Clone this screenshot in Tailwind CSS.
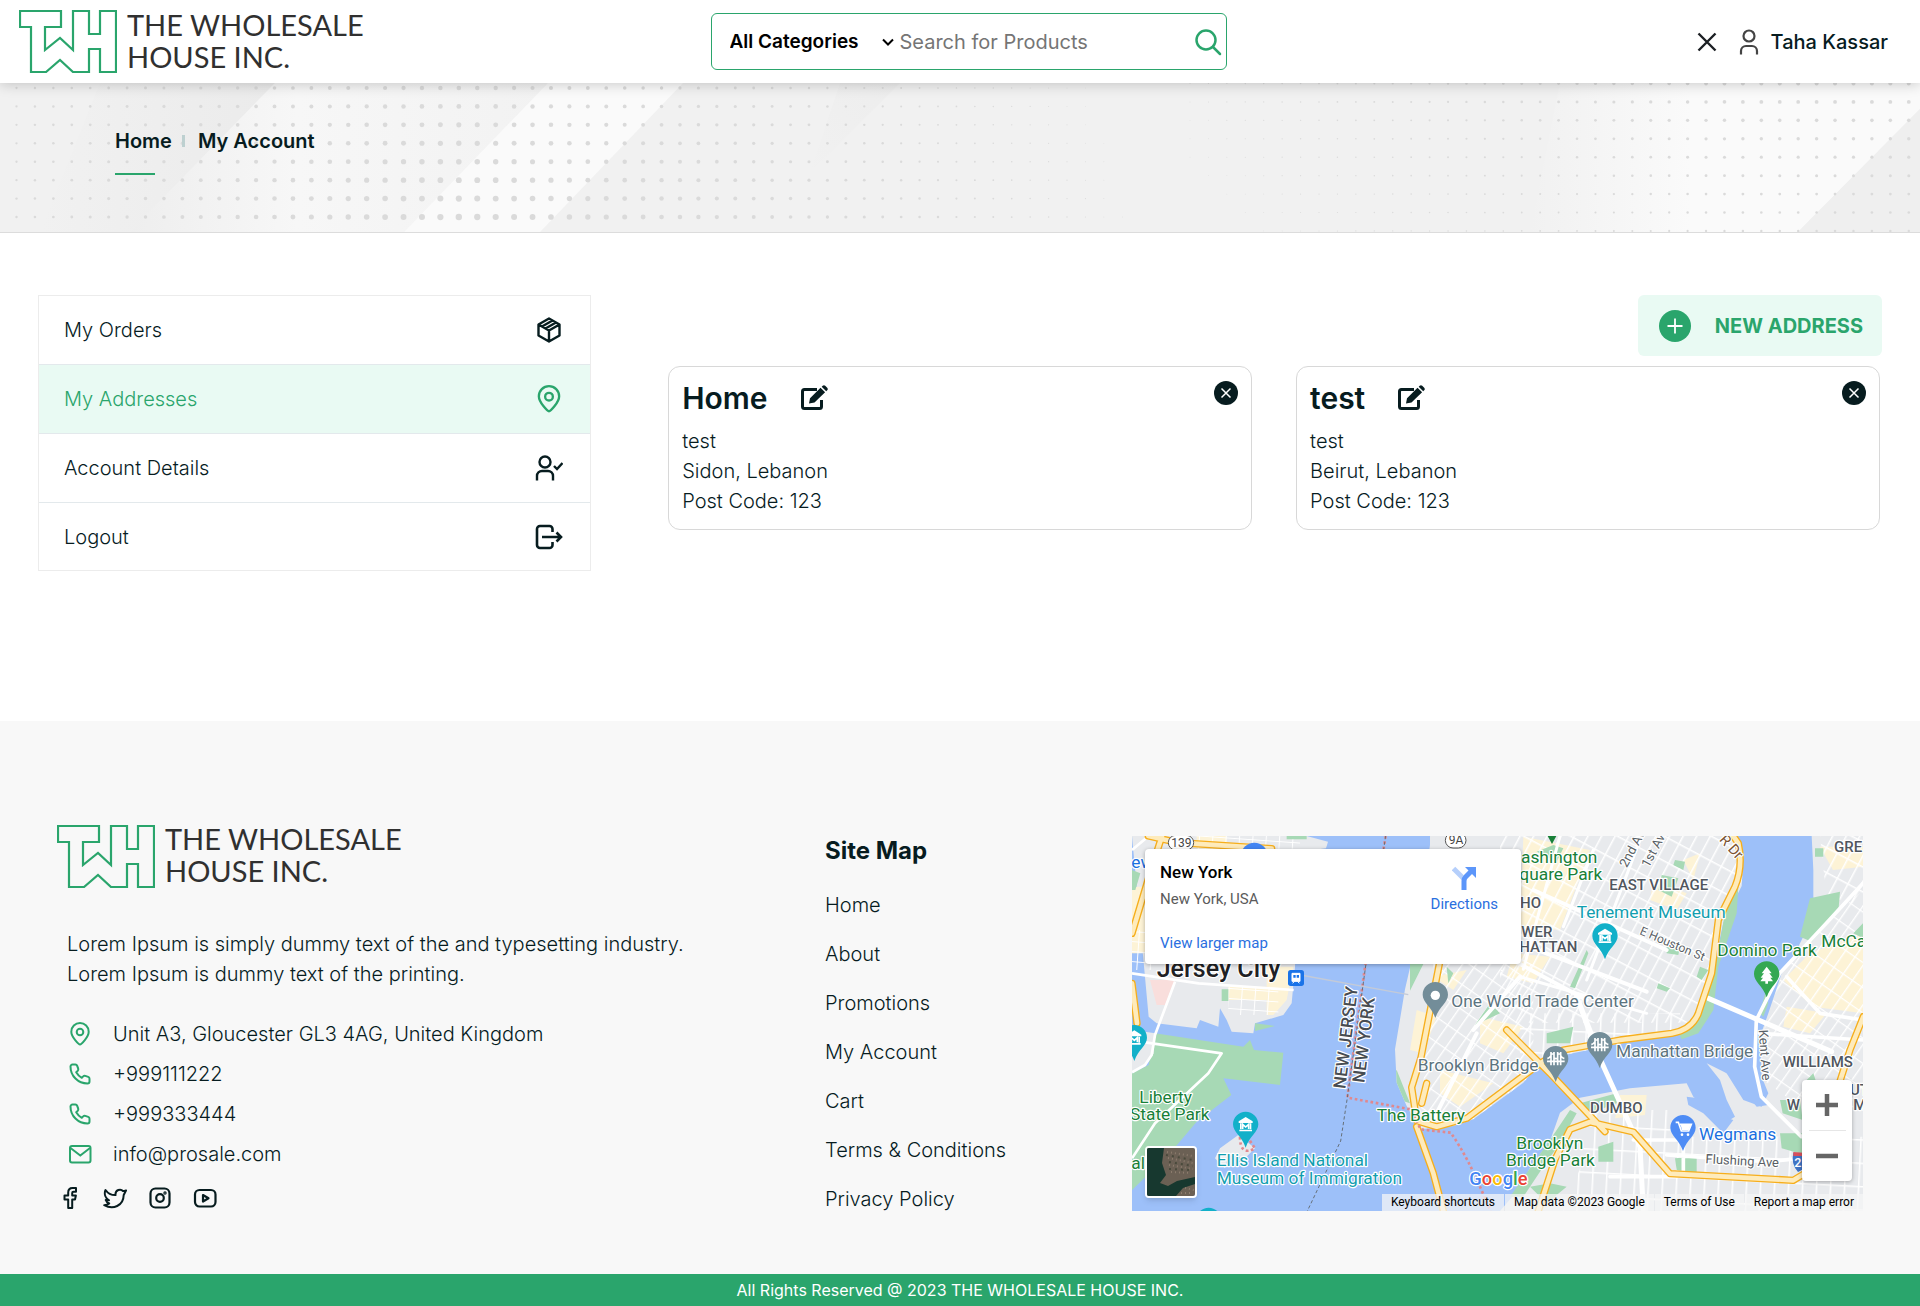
<!DOCTYPE html>
<html lang="en">
<head>
<meta charset="utf-8">
<meta name="viewport" content="width=device-width, initial-scale=1">
<title>My Addresses - The Wholesale House Inc.</title>
<script src="https://cdn.jsdelivr.net/npm/@tailwindcss/browser@4"></script>
</head>
<body class="bg-white font-['Inter',sans-serif] text-xl/[30px] font-light text-[#071c1f]">

<!-- Shared shapes -->
<svg class="hidden" aria-hidden="true">
  <symbol id="twh" viewBox="0 0 98 63"><path d="M1 1h41v16H26v23l15-12 13 12V1h16v23h11V1h16v61H81V39H70v23H54L41 50 27 62H12V17H1z" fill="none" stroke="#2aa56c" stroke-width="2.200"/></symbol>
  <symbol id="pin" viewBox="0 0 24 24"><path d="M12 22.500C10.800 22.500 3.300 15 3.300 9.700a8.700 8.700 0 0 1 17.400 0C20.700 15 13.200 22.500 12 22.500z" fill="none" stroke="currentColor" stroke-width="2"/><circle cx="12" cy="10" r="3.300" fill="none" stroke="currentColor" stroke-width="2"/></symbol>
  <symbol id="phone" viewBox="0 0 24 24"><path d="M2.500 4.500a2 2 0 0 1 2-2h2.800a2 2 0 0 1 1.900 1.300l1 2.900a2 2 0 0 1-.6 2.200L8.200 10.200a15 15 0 0 0 5.600 5.600l1.400-1.400a2 2 0 0 1 2.100-.5l2.900 1a2 2 0 0 1 1.300 1.900v2.700a2 2 0 0 1-2 2C10 21.500 2.500 14 2.500 4.500z" fill="none" stroke="currentColor" stroke-width="2" stroke-linejoin="round"/></symbol>
  <symbol id="edit" viewBox="0 0 30 26"><path d="M17 4.500H4.500a2 2 0 0 0-2 2v15a2 2 0 0 0 2 2h15a2 2 0 0 0 2-2V15" fill="none" stroke="currentColor" stroke-width="3"/><path d="M9 18.500l1-5.300L20.500 2.800l4.600 4.500L14.500 17.600zM21.700 1.800l1-1a1.800 1.800 0 0 1 2.500 0l2 2a1.800 1.800 0 0 1 0 2.500l-1 1z" fill="currentColor"/></symbol>
  <symbol id="close" viewBox="0 0 24 24"><circle cx="12" cy="12" r="12" fill="currentColor"/><path d="M7.500 7.500l9 9m0-9l-9 9" stroke="#fff" stroke-width="1.500"/></symbol>
</svg>

<header class="relative z-10 flex h-[83px] items-center bg-white pr-8 pl-[19px] shadow-[0_2px_12px_rgba(0,0,0,0.18)]">
  <div class="flex-1">
    <a href="#" class="flex items-center gap-2.5 font-['Lato',sans-serif] text-[29px]/8 font-normal text-[#303030]">
      <svg class="h-[63px] w-[98px]"><use href="#twh"/></svg>
      <span class="pb-0.5">THE WHOLESALE<br>HOUSE INC.</span>
    </a>
  </div>
  <form class="ml-[30px] flex h-[57px] w-[516px] items-center rounded-md border border-[#2aa56c] pr-1 pl-[18px]">
    <div class="relative">
      <select aria-label="Category" class="w-[170px] appearance-none bg-transparent text-[19px] font-semibold text-black"><option>All Categories</option></select>
      <svg class="pointer-events-none absolute top-1/2 right-1.5 h-3 w-3 -translate-y-1/2" viewBox="0 0 12 12" fill="none" stroke="#000" stroke-width="2"><path d="M1 3.500l5 5 5-5"/></svg>
    </div>
    <input type="search" aria-label="Search for Products" placeholder="Search for Products" class="min-w-0 flex-1 bg-transparent font-normal outline-none placeholder:text-[#757575]">
    <button type="button" aria-label="Search"><svg class="h-7 w-7" viewBox="0 0 28 28" fill="none" stroke="#2aa56c" stroke-width="2.500" stroke-linecap="round"><circle cx="12" cy="12" r="9.500"/><path d="M19 19l7 7"/></svg></button>
  </form>
  <div class="flex flex-1 items-center justify-end gap-3 font-medium">
    <button type="button" aria-label="Close" class="mr-2.5"><svg class="h-5 w-5" viewBox="0 0 20 20" stroke="#1b1f23" stroke-width="2.400"><path d="M1.500 1.500l17 17m0-17l-17 17"/></svg></button>
    <a href="#" class="flex items-center gap-3"><svg class="h-[26px] w-5" viewBox="0 0 20 26" fill="none" stroke="#444" stroke-width="2.200"><circle cx="10" cy="7" r="5.500"/><path d="M2 25.500V22a5 5 0 0 1 5-5h6a5 5 0 0 1 5 5v3.500"/></svg>Taha Kassar</a>
  </div>
</header>

<section class="relative h-[150px] overflow-hidden border-b border-[#dcdcdc] bg-[#f1f1f1]">
  <svg class="absolute inset-0 h-full w-full" viewBox="0 83 1920 149" preserveAspectRatio="none" aria-hidden="true">
    <defs>
      <linearGradient id="b1"><stop offset="0" stop-color="#f1f1f1"/><stop offset="1" stop-color="#ebebeb"/></linearGradient>
      <linearGradient id="b2"><stop offset="0" stop-color="#eeeeee"/><stop offset=".4" stop-color="#f7f7f7"/><stop offset="1" stop-color="#f2f2f2"/></linearGradient>
      <linearGradient id="b3"><stop offset="0" stop-color="#f1f1f1"/><stop offset="1" stop-color="#fafafa"/></linearGradient>
      <linearGradient id="b4" x1="0" y1="1" x2="1" y2="0"><stop offset="0" stop-color="#f1f1f1"/><stop offset="1" stop-color="#ededed"/></linearGradient>
    </defs>
    <path d="M100 83h175L130 232H40z" fill="url(#b1)"/>
    <path d="M275 83h273L404 232H130z" fill="url(#b2)"/>
    <path d="M548 83h135L540 232H404z" fill="#fafafa"/>
    <path d="M840 83h60l-90 90z" fill="url(#b4)"/>
    <path d="M1560 83h130v149h-160z" fill="url(#b3)"/>
    <path d="M1689 83h231v26L1798 232H1689z" fill="#fafafa"/>
    <path d="M1920 109v123h-122z" fill="#efefef"/>
    <g id="dots" fill="#dadada"></g>
  </svg>
  <nav class="relative px-[115px] pt-[43px] font-semibold">
    <ol class="flex items-center">
      <li><a href="#">Home</a></li>
      <li class="mr-[13px] ml-2.5 h-3 w-[3px] bg-[#bdd0d0]"></li>
      <li>My Account</li>
    </ol>
    <div class="mt-[17px] h-0.5 w-10 bg-[#2aa56c]"></div>
  </nav>
</section>

<main class="flex items-start gap-[77px] px-[38px] pt-[62px] pb-[150px]">
  <nav class="w-[30%] shrink-0 border border-[#ececec]">
    <a href="#" class="flex h-[69px] items-center justify-between border-b border-[#e3e9ec] pr-[27px] pl-[25px]">My Orders
      <svg class="h-7 w-7" viewBox="0 0 28 28" fill="none" stroke="currentColor" stroke-width="2.400" stroke-linejoin="round"><path d="M14 2.500l10.500 6v11L14 25.500l-10.500-6v-11zM3.500 8.500L14 14.500l10.500-6M14 14.500v11M7 10.500L17.500 4.500M10.500 12.500L21 6.500"/></svg></a>
    <a href="#" class="flex h-[69px] items-center justify-between border-b border-[#e3e9ec] bg-[#e9faf3] pr-[27px] pl-[25px] text-[#2aa56c]">My Addresses
      <svg class="h-7 w-7"><use href="#pin"/></svg></a>
    <a href="#" class="flex h-[69px] items-center justify-between border-b border-[#e3e9ec] pr-[27px] pl-[25px]">Account Details
      <svg class="h-7 w-7" viewBox="0 0 28 28" fill="none" stroke="currentColor" stroke-width="2.400"><circle cx="10" cy="8" r="5.500"/><path d="M2 26.500V22a5 5 0 0 1 5-5h6a5 5 0 0 1 5 5v4.500M19 12l3 3 5.500-6"/></svg></a>
    <a href="#" class="flex h-[67px] items-center justify-between pr-[27px] pl-[25px]">Logout
      <svg class="h-7 w-7" viewBox="0 0 28 28" fill="none" stroke="currentColor" stroke-width="2.600"><path d="M17.500 9V6a3 3 0 0 0-3-3H5a3 3 0 0 0-3 3v16a3 3 0 0 0 3 3h9.500a3 3 0 0 0 3-3v-3M7 14h19M21.500 9.500L26 14l-4.500 4.500"/></svg></a>
  </nav>

  <div class="flex flex-1 flex-col gap-2.5">
    <button type="button" class="flex h-[61px] items-center gap-6 self-end rounded-md bg-[#e9faf3] pr-[19px] pl-[21px] font-bold text-[#2aa56c]">
      <svg class="h-8 w-8" viewBox="0 0 32 32"><circle cx="16" cy="16" r="16" fill="#2aa56c"/><path d="M16 8.500v15M8.500 16h15" stroke="#fff" stroke-width="1.800"/></svg>NEW ADDRESS</button>
    <div class="mr-0.5 grid grid-cols-2 gap-11">
      <article class="h-[164px] rounded-xl border border-[#d8d8d8] px-[13px] pt-3.5">
        <div class="flex justify-between">
          <h2 class="flex items-center gap-8 text-3xl/[34px] font-semibold">Home <button type="button" aria-label="Edit Home"><svg class="h-[26px] w-[30px]"><use href="#edit"/></svg></button></h2>
          <button type="button" aria-label="Delete Home" class="h-6 w-6"><svg class="h-6 w-6"><use href="#close"/></svg></button>
        </div>
        <p class="mt-[11px]">test<br>Sidon, Lebanon<br>Post Code: 123</p>
      </article>
      <article class="h-[164px] rounded-xl border border-[#d8d8d8] px-[13px] pt-3.5">
        <div class="flex justify-between">
          <h2 class="flex items-center gap-8 text-3xl/[34px] font-semibold">test <button type="button" aria-label="Edit test"><svg class="h-[26px] w-[30px]"><use href="#edit"/></svg></button></h2>
          <button type="button" aria-label="Delete test" class="h-6 w-6"><svg class="h-6 w-6"><use href="#close"/></svg></button>
        </div>
        <p class="mt-[11px]">test<br>Beirut, Lebanon<br>Post Code: 123</p>
      </article>
    </div>
  </div>
</main>

<footer>
  <div class="grid grid-cols-[768fr_307fr_731fr] items-start bg-[#f8f8f8] px-[57px] pt-[102px] pb-[60px]">
    <div>
      <a href="#" class="flex items-center gap-2.5 font-['Lato',sans-serif] text-[29px]/8 font-normal text-[#303030]">
        <svg class="h-[63px] w-[98px]"><use href="#twh"/></svg>
        <span class="pb-0.5">THE WHOLESALE<br>HOUSE INC.</span>
      </a>
      <p class="mt-10 max-w-[660px] pl-2.5">Lorem Ipsum is simply dummy text of the and typesetting industry. Lorem Ipsum is dummy text of the printing.</p>
      <ul class="mt-[30px] flex flex-col gap-2.5 pl-[11px]">
        <li class="flex items-center gap-[21px]"><svg class="h-6 w-6 text-[#2aa56c]"><use href="#pin"/></svg>Unit A3, Gloucester GL3 4AG, United Kingdom</li>
        <li class="flex items-center gap-[21px]"><svg class="h-6 w-6 text-[#2aa56c]"><use href="#phone"/></svg>+999111222</li>
        <li class="flex items-center gap-[21px]"><svg class="h-6 w-6 text-[#2aa56c]"><use href="#phone"/></svg>+999333444</li>
        <li class="flex items-center gap-[21px]"><svg class="h-6 w-6" viewBox="0 0 24 24" fill="none" stroke="#2aa56c" stroke-width="2"><rect x="2" y="4" width="20.500" height="16.500" rx="2"/><path d="M2.500 6l9.800 7.500L22 6"/></svg>info@prosale.com</li>
      </ul>
      <div class="mt-[17px] flex gap-[21px] pl-px">
        <a href="#" aria-label="Facebook"><svg class="h-6 w-6" viewBox="0 0 24 24" fill="none" stroke="currentColor" stroke-width="2" stroke-linejoin="round"><path d="M18 2h-3.500c-3 0-4.300 1.900-4.300 4.500V9.500H6.500v4h3.700V22h4v-8.500H17l.9-4h-3.700V7c0-.8.400-1.200 1.300-1.200H18z"/></svg></a>
        <a href="#" aria-label="Twitter"><svg class="h-6 w-6" viewBox="0 0 24 24" fill="none" stroke="currentColor" stroke-width="2" stroke-linejoin="round"><path d="M23 4.500c-1 .3-2 .6-3 .6-2-2.500-8-1.800-7.500 4C8.500 9.200 5 7.500 2.500 4 .8 8 2.500 12 6 14.300c-1.200.2-2.200 0-3.300-.3.600 1.800 1.700 2.800 3.500 3.500-1.200 1-3 1.700-5 1.700C10 24 20.500 20 20.700 9z"/></svg></a>
        <a href="#" aria-label="Instagram"><svg class="h-6 w-6" viewBox="0 0 24 24" fill="none" stroke="currentColor" stroke-width="2.200"><rect x="2.500" y="2.500" width="19" height="19" rx="5"/><circle cx="12" cy="12" r="3.800"/><circle cx="17" cy="7" r=".6"/></svg></a>
        <a href="#" aria-label="YouTube"><svg class="h-6 w-6" viewBox="0 0 24 24" fill="none" stroke="currentColor" stroke-width="2.200" stroke-linejoin="round"><rect x="2" y="4" width="20.500" height="16.500" rx="4.500"/><path d="M10 9l5.500 3.200L10 15.500z"/></svg></a>
      </div>
    </div>

    <nav class="pt-3">
      <h2 class="text-2xl/8 font-bold">Site Map</h2>
      <ul class="mt-[23px] flex flex-col gap-[19px]">
        <li><a href="#">Home</a></li>
        <li><a href="#">About</a></li>
        <li><a href="#">Promotions</a></li>
        <li><a href="#">My Account</a></li>
        <li><a href="#">Cart</a></li>
        <li><a href="#">Terms &amp; Conditions</a></li>
        <li><a href="#">Privacy Policy</a></li>
      </ul>
    </nav>

    <div class="relative mt-[13px] h-[375px] overflow-hidden font-['Roboto',sans-serif] font-normal">
      <svg class="h-full w-full" viewBox="36 48 2193 1125" preserveAspectRatio="xMidYMid slice" role="img" aria-label="Map of New York">
        <defs>
          <pattern id="g1" width="36" height="66" patternUnits="userSpaceOnUse" patternTransform="rotate(28)"><path d="M0 0h36M0 0v66" stroke="#fff" stroke-width="9" fill="none"/></pattern>
          <pattern id="g2" width="34" height="62" patternUnits="userSpaceOnUse" patternTransform="rotate(35)"><path d="M0 0h34M0 0v62" stroke="#fff" stroke-width="8" fill="none"/></pattern>
          <pattern id="g3" width="42" height="70" patternUnits="userSpaceOnUse" patternTransform="rotate(3)"><path d="M0 0h42M0 0v70" stroke="#fff" stroke-width="9" fill="none"/></pattern>
          <pattern id="g4" width="40" height="30" patternUnits="userSpaceOnUse" patternTransform="rotate(4)"><path d="M0 0h40M0 0v30" stroke="#fff" stroke-width="6" fill="none"/></pattern>
          <clipPath id="mh"><path d="M930 48h900l40 60-5 90-55 110-30 140-50 150-40 40-200 35-220 45-60 70-150 110-60 20-100 10-40-70-30-70-5-100 30-180z"/></clipPath>
          <symbol id="mk" viewBox="0 0 76 110" overflow="visible"><path d="M38 0C17 0 0 17 0 38c0 24 26 34 38 70 12-36 38-46 38-70C76 17 59 0 38 0z"/></symbol>
          <g id="museum" fill="#fff"><path d="M38 16l21 13v5H17v-5zM19 54h38v5H19z"/><path d="M21 35h5v18h-5zM50 35h5v18h-5z"/><path d="M29 52V38l9 8 9-8v14" fill="none" stroke="#fff" stroke-width="5"/></g>
          <g id="span" fill="none" stroke="#fff" stroke-width="5"><path d="M24 18v40M33 18v40M44 18v40M53 18v40M22 24h13M42 24h13M12 46h53M33 36q5 4 11 0M13 38q7-2 11-9M64 38q-7-2-11-9"/></g>
        </defs>
        <path d="M36 48h2193v1125H36z" fill="#9dc0f9"/>

        <!-- New Jersey -->
        <path d="M36 48h524l64 17-6 20-80 10-13 345-10 110-25 35-85 25-5 30-65-5-15-35-20-35-5 55-55-20-10 25-120-15-24-20z" fill="#e8eaed"/>
        <path d="M440 440h80l-20 100-40 45h-20zM325 500h115v40H325zM36 200h70v200H36zM230 48h90v38h-90z" fill="#fdf3d6"/>
        <path d="M325 500h150v85H325zM36 330h80v120H36zM160 48h380v38H160z" fill="url(#g4)"/>
        <path d="M90 480h75l-30 75h-25z" fill="#f9dedc"/>
        <path d="M105 640l265 40 20-20 12 30 88 8-10 97-170-20 24 50-104 80-80 95-114 110V760l50-25 15-75z" fill="#a7d9b5"/>
        <path d="M36 630l70 10-5 60-20 30-45 25z" fill="#e8eaed"/>
        <path d="M405 610l60 8-60 15zM305 508h20v35h-20zM36 150l25 10-15 50H36zM500 48h60v10h-60z" fill="#a7d9b5"/>
        <g fill="none" stroke="#fff" stroke-width="8" stroke-linejoin="round">
          <path d="M36 460l200 30 285 20M165 485l-60 160-10 60-20 30-39 22M60 665l245 35-40 60-160 150-69 105M36 90l50-42"/></g>

        <!-- Ellis Island -->
        <path d="M300 985l55-40 50 40-30 30-50 -10-10 40-30-30z" fill="#e8eaed"/>

        <!-- Manhattan -->
        <path d="M930 75V48h900l40 60-5 90-55 110-30 140-50 150-40 40-200 35-220 45-60 70-150 110-60 20-100 10-40-70-30-70-5-100 30-180 30-130z" fill="#e8eaed"/>
        <g clip-path="url(#mh)">
          <path d="M1210 50l200 40-90 240-120-10zM890 570l60 20-40 110-40-10zM1180 400l110 10-50 80-80-20zM960 750l160 40-100 70-60-40zM1080 590l130 30-60 80-70-30zM1690 120l50-20-20 80zM1600 180l100 40-30 50-80-30zM940 470l100-20-40 60z" fill="#fdf3d6"/>
          <path d="M1140 48h800v560h-800z" fill="url(#g1)"/>
          <path d="M940 432h300v470H900z" fill="url(#g2)"/>
          <path d="M1200 580h480v130h-480z" fill="url(#g3)"/>
          <g fill="#a7d9b5"><path d="M1065 615l45-65 30 30zM1625 165l50 10-20 55-40-20zM1250 95l50-20 30 10-20 40zM1400 390l5 10-40 105-15-5zM1640 380h40l-5 25-35-5zM1740 440l25 10-20 30-15-10zM1615 490l35 15-10 10-30-10zM1280 640l80-20-10 50-70 0zM870 432h40l-40 80zM980 440l20 20-15 30zM815 770l15-20 40 100-30-10zM1665 120l30 5-5 25-30-15z"/></g>
          <g fill="none" stroke="#fff" stroke-linecap="round"><path stroke-width="12" d="M1240 385l340 130M1370 530l45 130M1240 210l400 180M940 900l130-260M1200 470l-140 160M1140 400l260 140"/><path stroke-width="9" d="M1200 470l380 110M1420 90l-90 230M1560 60l-160 420M1320 48l-110 400"/></g>
        </g>
        <path d="M1855 200l-5 80-55 160-15 130-45 70-50 18-10-20 60-40 50-150 30-170z" fill="#a7d9b5"/>

        <!-- Brooklyn -->
        <path d="M2075 48h154v1125H1140l60-70 30-60 60-80 30-85 60-45 150-28 170-15 20 40 45 40 30 50 50-30-25-50-20-60-40-50 60 30 50 80 55 20 20-40-20-50 -5-120 25-70 40-120 30-40 40-80 30-80 -5-30 0-80z" fill="#e8eaed"/>
        <path d="M1700 830l80 10 40 20-40 20 60 20-30 40-60-60-45-25zM1790 730l80 80 40 50 35-5-50-70-30-55z" fill="#9dc0f9"/>
        <path d="M2070 400l159-60v240l-150-20-90-80zM2000 560l120 20-50 60-80-20zM1500 825h80l-5 60-90 10zM2100 80h129v60l-90 10z" fill="#fdf3d6"/>
        <path d="M1985 460l80-100 164-150v620l-90 100-210-150-10-110z" fill="url(#g2)"/>
        <path d="M2100 48h129v210l-110-30z" fill="url(#g1)"/>
        <path d="M1400 870h270l40 80h519v223h-900l60-150z" fill="url(#g3)"/>
        <g fill="#a7d9b5"><path d="M2070 235l90-20-5 60-80 90-35-15zM2200 340l29-30v45zM1980 840h60l8 60-60-20zM1980 940h75v65l-70-20zM1435 980l45-15v60h-45zM1665 1015l65-5v50l-60-10zM1290 960l60-90 20 10-50 90-50 70-60 90h-40zM1380 850l110-30v30l-80 30zM1340 1100l-60 50-50-50 60-10zM1920 580l15-60 10 30-15 40zM2085 85h25v25h-25zM2060 780l20-20 10 30z"/></g>
        <g fill="none" stroke="#fff" stroke-linecap="round" stroke-linejoin="round"><path stroke-width="15" d="M1765 535l370 160M1410 650l150 330 10 193M1370 530l55 140"/><path stroke-width="11" d="M2229 190l-110 120-140 150-70 140-5 140 20 90 120 120M1470 1070h200M1540 960h150v100M1640 1005l300 20 100-10M2229 660l-310-20M2000 470l100 110 129 20"/></g>

        <!-- Highways: orange casing, then the pale carriageway -->
        <g fill="none" stroke-linecap="round" stroke-linejoin="round">
          <path stroke="#f6ae1c" stroke-width="22" d="M958 432l-55 280-28 90 15 100 60 18 90-25 220-165 70-40 170-30 155-20q60-10 80-60l40-120 20-160 50-100q25-60 10-130l-55-80M920 790l-15 60M890 920l50 140 30 113M1160 630l130 130 165 175M1255 1173l50-155 45-90 60-22 130 30 110 125 370 20 50-30M2145 830l45-140 40-100M36 340l60-200 30-92M85 48l90 20 280 18M36 490l15 120"/>
          <path stroke="#feebbb" stroke-width="14" d="M958 432l-55 280-28 90 15 100 60 18 90-25 220-165 70-40 170-30 155-20q60-10 80-60l40-120 20-160 50-100q25-60 10-130l-55-80M920 790l-15 60M890 920l50 140 30 113M1160 630l130 130 165 175M1255 1173l50-155 45-90 60-22 130 30 110 125 370 20 50-30M2145 830l45-140 40-100M36 340l60-200 30-92M85 48l90 20 280 18M36 490l15 120"/>
        </g>
        <g fill="none"><path d="M797 48l-8 50-55 350-52 385 190 35 30 60 90 10q50 70 100 190l20 45M360 950q0 60 45 35l-20-30" stroke="#e0898f" stroke-width="8" stroke-dasharray="8 8"/><path d="M797 48l-60 390-55 395-20 130-100 210" stroke="#66707a" stroke-width="3" stroke-dasharray="10 7"/><path d="M525 462l340 62" stroke="#c3cad8" stroke-width="4"/></g>

        <!-- Pins -->
        <g fill="#12b0c9"><use href="#mk" x="339" y="875" width="76" height="110"/><use href="#mk" x="1417" y="310" width="76" height="110"/><use href="#mk" x="5" y="615" width="76" height="110"/><use href="#mk" x="228" y="1163" width="76" height="110"/></g>
        <use href="#museum" x="339" y="875"/><use href="#museum" x="1417" y="310"/><use href="#museum" x="5" y="615"/>
        <g fill="#738d99"><use href="#mk" x="908" y="486" width="76" height="110"/><use href="#mk" x="1269" y="678" width="76" height="110"/><use href="#mk" x="1401" y="636" width="76" height="110"/></g>
        <circle cx="946" cy="526" r="14" fill="#fff"/><use href="#span" x="1269" y="678"/><use href="#span" x="1401" y="636"/>
        <use href="#mk" x="1902" y="424" width="76" height="110" fill="#34a853"/><path d="M1940 440l-15 20h7l-10 13h7l-8 11h15v7h8v-7h15l-8-11h7l-10-13h7z" fill="#fff"/>
        <use href="#mk" x="1651" y="885" width="76" height="110" fill="#4e8cf5"/><path d="M1667 907h8l9 26h22l8-20h-34" fill="none" stroke="#fff" stroke-width="5"/><path d="M1681 912h32l-7 18h-20z" fill="#fff"/><circle cx="1686" cy="944" r="4" fill="#fff"/><circle cx="1704" cy="944" r="4" fill="#fff"/>
        <path d="M1283 48h26l-13 24z" fill="#188038"/><circle cx="403" cy="108" r="40" fill="#4285f4"/>
        <rect x="504" y="450" width="48" height="48" rx="8" fill="#1a73e8"/><path d="M516 460h24v24h-24zM518 490l5-6m15 6l-5-6" fill="#fff" stroke="#fff" stroke-width="3"/><path d="M520 465h7v8h-7zm10 0h7v8h-7z" fill="#1a73e8"/>
        <path d="M2020 998l18 4 12-4v50l-16 8q-22-25-14-58z" fill="#3f73c4"/><path d="M2020 996l30 2v10h-30z" fill="#d8515b"/><text x="2023" y="1040" fill="#fff" font-size="38" font-weight="500">2</text>
        <g fill="#fff" stroke="#555" stroke-width="3"><rect x="145" y="46" width="76" height="44" rx="22"/><rect x="976" y="38" width="62" height="46" rx="23"/></g>

        <!-- Labels -->
        <g stroke="#fff" stroke-width="7" stroke-linejoin="round" paint-order="stroke" font-size="52">
          <g font-size="36" fill="#444"><text x="154" y="80" stroke="none">139</text><text x="986" y="73" stroke="none">9A</text></g>
          <text x="110" y="472" font-size="75" font-weight="500" fill="#202124">Jersey City</text>
          <g fill="#188038"><text x="58" y="848">Liberty</text><text x="30" y="901">State Park</text><text x="34" y="1046">al</text><text x="770" y="903">The Battery</text><text x="1203" y="128">ashington</text><text x="1198" y="180">quare Park</text><text x="1792" y="407">Domino Park</text><text x="2104" y="380">McCa</text><text x="1189" y="987">Brooklyn</text><text x="1158" y="1039">Bridge Park</text></g>
          <g fill="#129eaf"><text x="290" y="1038">Ellis Island National</text><text x="290" y="1092">Museum of Immigration</text><text x="1370" y="293">Tenement Museum</text></g>
          <g fill="#5c7480"><text x="994" y="560">One World Trade Center</text><text x="893" y="752">Brooklyn Bridge</text><text x="1488" y="710">Manhattan Bridge</text></g>
          <text x="1737" y="960" fill="#1a6fe0">Wegmans</text><text x="34" y="143" fill="#1a6fe0">ew</text>
          <g fill="#50565e" font-size="45" font-weight="500"><text x="1468" y="211">EAST VILLAGE</text><text x="1200" y="264">HO</text><text x="1204" y="350">WER</text><text x="1198" y="395">HATTAN</text><text x="2142" y="95">GRE</text><text x="1988" y="740">WILLIAMS</text><text x="1410" y="879">DUMBO</text><text x="2000" y="870">W</text><text x="2190" y="825">UT</text><text x="2200" y="870">MS</text></g>
          <g fill="#5a5f66" font-size="39"><text transform="translate(1520 145) rotate(-62)">2nd Ave</text><text transform="translate(1586 145) rotate(-62)">1st Ave</text><text transform="translate(1557 342) rotate(23)" font-size="36">E Houston St</text><text transform="translate(1916 630) rotate(86)">Kent Ave</text><text transform="translate(1756 1030) rotate(3)">Flushing Ave</text><text transform="translate(1796 60) rotate(48)" fill="#7a5230" font-size="44">R Dr</text></g>
          <g fill="#474c52" font-size="52" font-weight="500"><text transform="translate(676 808) rotate(-83)">NEW JERSEY</text><text transform="translate(733 790) rotate(-83)">NEW YORK</text></g>
          <text x="1048" y="1094" font-size="55" font-weight="500"><tspan fill="#4285f4">G</tspan><tspan fill="#ea4335">o</tspan><tspan fill="#fbbc04">o</tspan><tspan fill="#4285f4">g</tspan><tspan fill="#34a853">l</tspan><tspan fill="#ea4335">e</tspan></text>
        </g>
      </svg>

      <div class="absolute top-[13px] left-[13px] flex h-[115px] w-[376px] justify-between rounded-sm bg-white py-[13px] pr-[23px] pl-[15px] text-[15px]/5 shadow-[0_1px_4px_rgba(0,0,0,0.3)]">
        <div class="flex flex-col">
          <strong class="text-[17px]/5 font-medium text-black">New York</strong>
          <span class="mt-[7px] text-[#5b5b5b]">New York, USA</span>
          <a href="#" class="mt-6 text-[#2a6fe0]">View larger map</a>
        </div>
        <a href="#" class="flex flex-col items-center gap-1 pt-1 text-[#2a6fe0]">
          <svg class="h-6 w-6" viewBox="0 0 24 24" fill="none"><path d="M1.500 2.500L12 13" stroke="#b5cffb" stroke-width="5"/><path d="M12 24v-9q0-2.500 2-4.500l5-5" stroke="#5c96fa" stroke-width="5"/><path d="M13 1h11v11z" fill="#5c96fa"/></svg>Directions</a>
      </div>

      <button type="button" aria-label="Show satellite imagery" class="absolute bottom-[13px] left-[13px] h-[52px] w-[52px] overflow-hidden rounded-sm border-2 border-white shadow-md">
        <svg class="h-full w-full" viewBox="0 0 48 48"><path d="M0 0h48v48H0z" fill="#6b6054"/><path d="M0 0h17l-2 15 4 12-6 8 8 3 9-5 18-4v7l-12 4-7 8H0z" fill="#17382f"/><g fill="none" stroke="#8c7c6d" stroke-width="2" stroke-dasharray="1 3"><path d="M20 4l26 4M21 10l25 5M22 17l24 4M24 24l20 1M38 40l9 2M34 45h12"/></g><g fill="none" stroke="#4a4a3c" stroke-width="2" stroke-dasharray="2 4"><path d="M19 7l27 5M22 14l24 4M22 21l22 1"/></g></svg>
      </button>

      <div class="absolute right-[11px] bottom-[30px] flex w-[50px] flex-col items-center rounded-sm bg-white shadow-[0_1px_4px_rgba(0,0,0,0.3)]">
        <button type="button" aria-label="Zoom in" class="flex h-[50px] w-full items-center justify-center"><svg class="h-[22px] w-[22px]" viewBox="0 0 22 22"><path d="M11 0v22M0 11h22" stroke="#666" stroke-width="4.500"/></svg></button>
        <div class="h-px w-[37px] bg-[#e6e6e6]"></div>
        <button type="button" aria-label="Zoom out" class="flex h-[50px] w-full items-center justify-center"><svg class="h-[22px] w-[22px]" viewBox="0 0 22 22"><path d="M0 11h22" stroke="#666" stroke-width="4.500"/></svg></button>
      </div>

      <div class="absolute right-0 bottom-0 flex h-[17px] gap-px text-xs/[17px] whitespace-nowrap text-black">
        <button type="button" class="bg-[#f5f5f5]/75 px-[9px]">Keyboard shortcuts</button>
        <span class="bg-[#f5f5f5]/75 px-[9px]">Map data ©2023 Google</span>
        <a href="#" class="bg-[#f5f5f5]/75 px-[9px]">Terms of Use</a>
        <a href="#" class="bg-[#f5f5f5]/75 px-[9px]">Report a map error</a>
      </div>
    </div>
  </div>
  <p class="bg-[#2aa56c] text-center text-base/8 font-normal text-white">All Rights Reserved @ 2023 THE WHOLESALE HOUSE INC.</p>
</footer>

<script>
  // Halftone dots of the banner: each side has its own grid, fading out towards the middle.
  const group = document.getElementById('dots');
  const step = 18.43;
  function dot(x, y, r) {
    if (r < 0.4) return;
    const c = document.createElementNS('http://www.w3.org/2000/svg', 'circle');
    c.setAttribute('cx', x); c.setAttribute('cy', y); c.setAttribute('r', r);
    group.appendChild(c);
  }
  for (let row = 0; row < 9; row++) {
    for (let x = 16.5; x < 1180; x += step) {
      const y = 88 + row * step;
      const peak = 2.3 + row * 0.13;
      const r = x < 460 ? 1.1 + (peak - 1.1) * (x / 460) : peak * (1 - (x - 460) / 760);
      dot(x, y, r);
    }
    for (let x = 1190; x < 1920; x += step) {
      const y = 83.5 + row * step;
      dot(x, y, (0.5 + 1.5 * Math.min(1, (x - 1190) / 560)) * (1 - row * 0.05));
    }
  }
</script>
</body>
</html>
